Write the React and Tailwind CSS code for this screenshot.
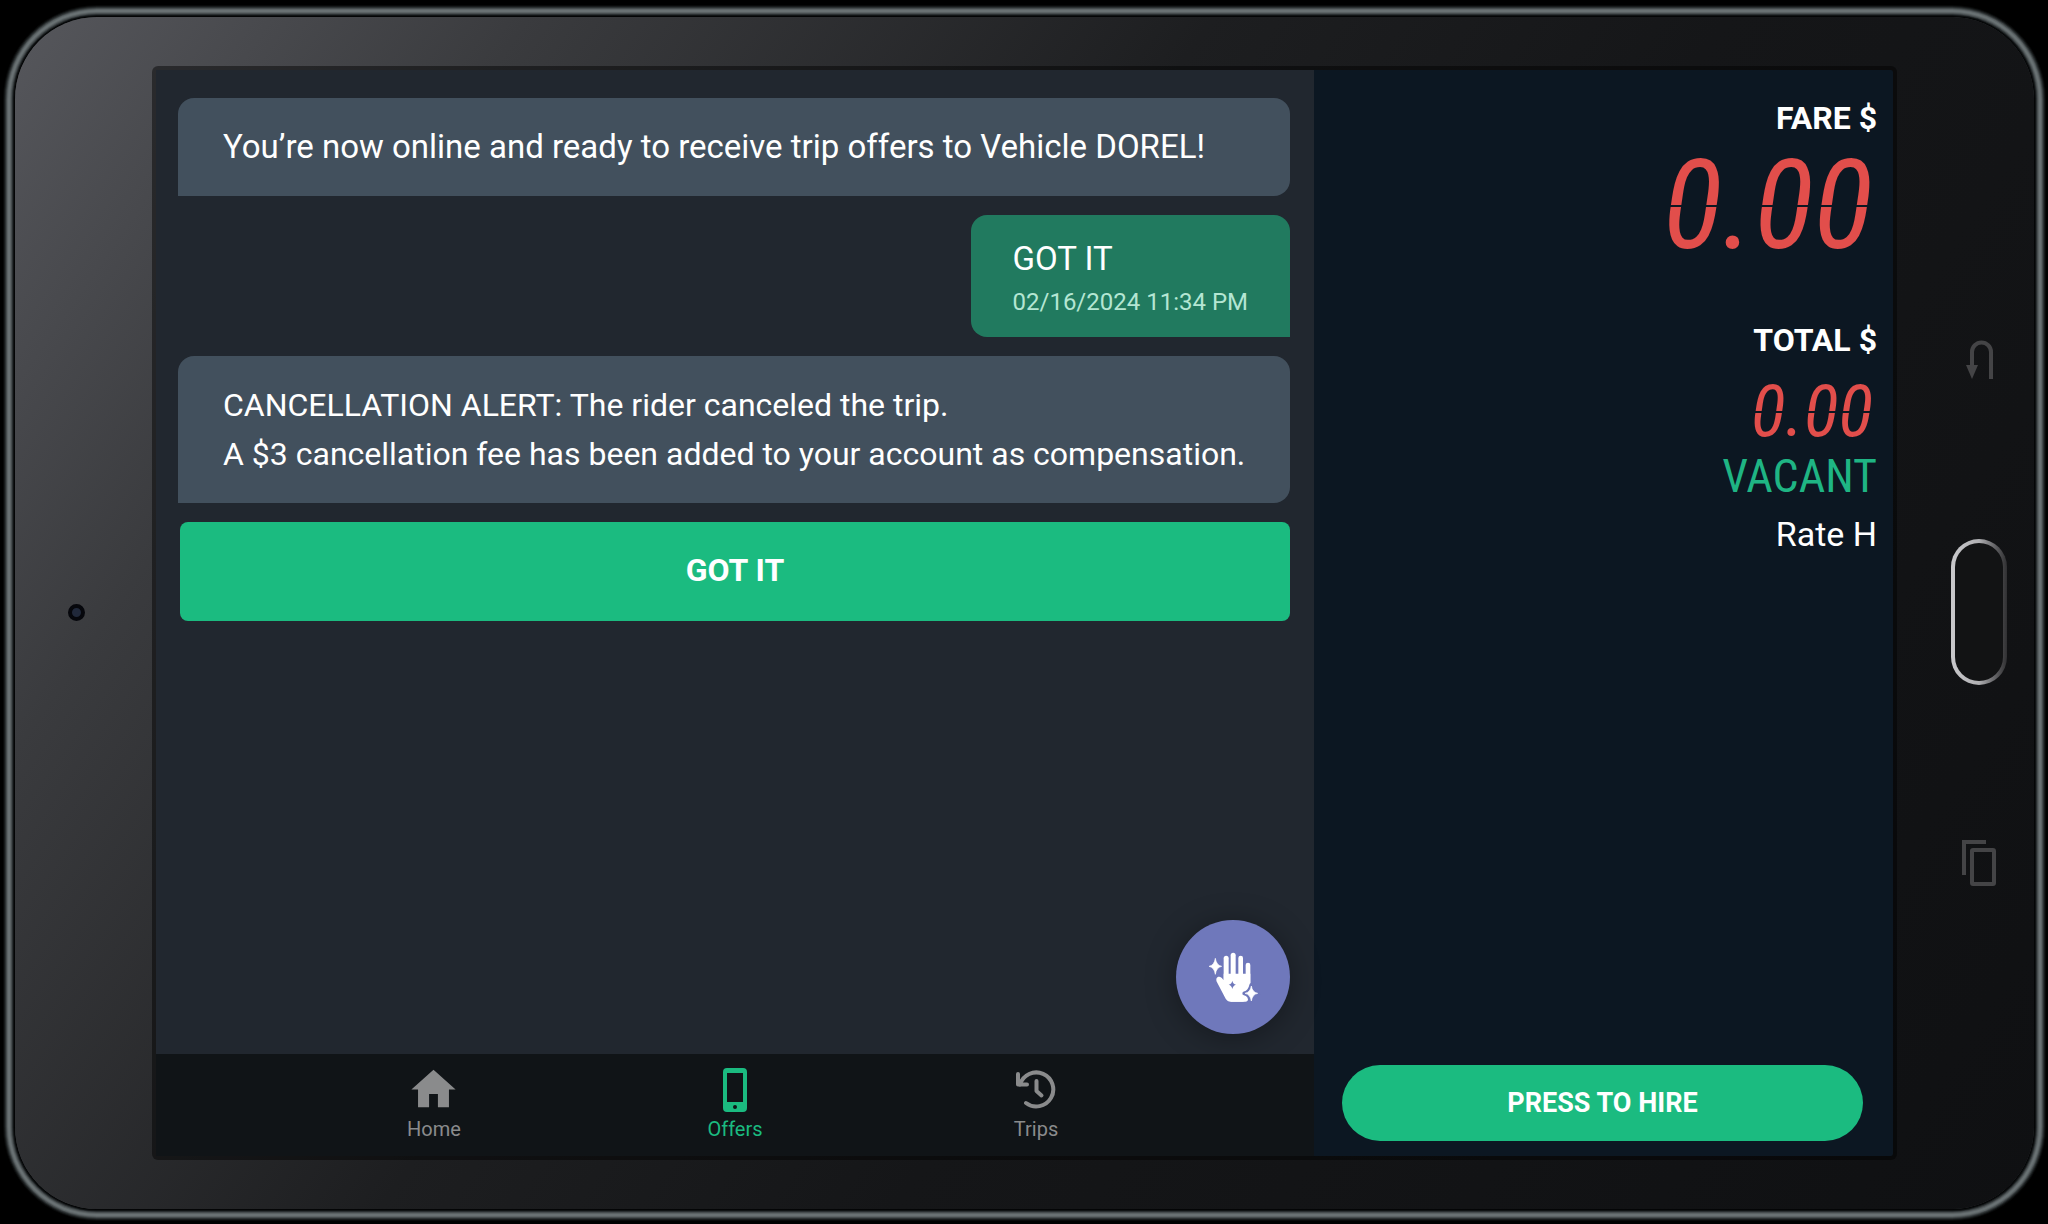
import { MdHome } from "react-icons/md";

const roboto = "font-['Roboto',sans-serif]";

function HandSparkleIcon() {
  return (
    <svg viewBox="-5 6 240 210" className="h-[70px] w-20" aria-hidden="true">
      <g fill="#fff">
        <rect x="87" y="47" width="15" height="80" rx="7.5" />
        <rect x="108" y="38" width="15" height="80" rx="7.5" />
        <rect x="131" y="47" width="14" height="80" rx="7" />
        <rect x="153" y="68" width="14" height="70" rx="7" />
        <path d="M87 101H167V140C167 165 155 185 143 185H108C101 185 97 182 93 176L67 127C62 116 67 109 74 110C80 111 84 116 87 121Z" />
        <path d="M100 150H150L160 178Q160 185 152 185H108Z" />
        <path d="M62 55Q65 76 81 79Q65 82 62 103Q59 82 43 79Q59 76 62 55Z" stroke="#fff" strokeWidth="2" />
      </g>
      <path d="M113 122Q115 132 124 134Q115 136 113 147Q111 136 102 134Q111 132 113 122Z" fill="#6f78bb" />
      <path d="M170 135Q174 156 191 160Q174 164 170 185Q166 164 149 160Q166 156 170 135Z" fill="#6f78bb" stroke="#6f78bb" strokeWidth="12" strokeLinejoin="round" />
      <path d="M170 138Q173 157 189 160Q173 163 170 183Q167 163 151 160Q167 157 170 138Z" fill="#fff" stroke="#fff" strokeWidth="2" />
    </svg>
  );
}

function PhoneIcon() {
  return (
    <svg viewBox="0 0 24 44" className="h-11 w-6" aria-hidden="true">
      <path
        fillRule="evenodd"
        fill="currentColor"
        d="M4 0H20Q24 0 24 4V40Q24 44 20 44H4Q0 44 0 40V4Q0 0 4 0ZM4 5V34H20V5ZM12 37A2 2 0 1 0 12 41A2 2 0 1 0 12 37Z"
      />
    </svg>
  );
}

function HistoryIcon() {
  return (
    <svg viewBox="0 0 42 40" className="h-10 w-[42px]" fill="none" stroke="currentColor" strokeWidth="4" strokeLinecap="round" strokeLinejoin="round" aria-hidden="true">
      <path d="M5 14.5A17 17 0 1 1 11 33" />
      <path d="M3 4V14.5H12" />
      <path d="M21.500 11V21L26.500 25.500" />
    </svg>
  );
}

function NavItem({ label, active, children }) {
  return (
    <a
      href="#"
      aria-current={active ? "page" : undefined}
      className={`flex flex-col items-center text-xl leading-6 ${active ? "text-[#1bbb80]" : "text-[#8a8b8c]"}`}
    >
      <span className="flex h-[55px] items-center justify-center">{children}</span>
      {label}
    </a>
  );
}

function DeviceKeys() {
  return (
    <div className="flex w-[137px] shrink-0 flex-col items-center justify-center gap-[155px] pb-0.5 pl-[26px] text-[#444446]">
      <button type="button" aria-label="Back">
        <svg viewBox="0 0 30 46" className="h-[46px] w-[30px]" aria-hidden="true">
          <path d="M8 30V14A9.500 9.500 0 0 1 27 14V41" fill="none" stroke="currentColor" strokeWidth="4" />
          <path d="M2 27H14L8 41Z" fill="currentColor" />
        </svg>
      </button>
      <button
        type="button"
        aria-label="Home key"
        className="h-[146px] w-14 rounded-full bg-gradient-to-r from-[#c9c9cc] via-[#b0b0b3] to-[#303032] p-1"
      >
        <span className="block h-full rounded-full bg-[#121314]" />
      </button>
      <button type="button" aria-label="Recent apps">
        <svg viewBox="0 0 34 46" className="h-[46px] w-[34px]" fill="none" stroke="currentColor" strokeWidth="4" aria-hidden="true">
          <path d="M24 2H2V35" />
          <rect x="10" y="10" width="22" height="34" rx="1" />
        </svg>
      </button>
    </div>
  );
}

export default function App() {
  return (
    <div className={`flex min-h-screen bg-black pt-[17px] pr-3.5 pb-[15px] pl-[15px] ${roboto}`}>
      <div className="flex flex-1 rounded-[82px] bg-[linear-gradient(125deg,#56575c_0%,#3a3b3e_18%,#1d1e20_42%,#151618_60%,#0f1012_100%)] shadow-[0_0_0_1px_#040506,0_0_0_2px_#101314,0_0_0_3px_#2a2f31,0_0_0_4px_#464c4e,0_0_0_5px_#5b6264,0_0_0_7px_#697173,0_0_0_8px_#5d6466,0_0_0_9px_#454b4d,0_0_0_10px_#2c3132,0_0_0_11px_#171a1b,0_0_0_12px_#080909]">
        <div className="flex w-[137px] shrink-0 items-center justify-center pr-3.5 pb-0.5">
          <span className="size-[17px] rounded-full border-4 border-[#06070c] bg-[#20283a]" />
        </div>

        <main className="my-[49px] flex flex-1 rounded-md border-4 border-black/45 bg-clip-padding bg-[#0c1722]">
          <section className="flex flex-2 flex-col bg-[#21272f]">
            <div className="flex flex-1 flex-col gap-5 pt-7 pr-6 pb-5 pl-[22px]">
              <div className="flex flex-col gap-[19px] text-white">
                <p className="rounded-2xl rounded-bl-none bg-[#42505d] px-[45px] py-6 text-[33px] leading-[50px]">
                  You’re now online and ready to receive trip offers to Vehicle DOREL!
                </p>
                <div className="self-end rounded-2xl rounded-br-none bg-[#217a5f] px-[42px] pt-5 pb-4">
                  <p className="text-[33px] leading-[48px]">GOT IT</p>
                  <p className="text-2xl leading-[38px] text-[#b4e6d3]">02/16/2024 11:34 PM</p>
                </div>
                <p className="rounded-2xl rounded-bl-none bg-[#42505d] pt-[25px] pr-4 pb-6 pl-[45px] text-[32px] leading-[49px]">
                  CANCELLATION ALERT: The rider canceled the trip.
                  <br />A $3 cancellation fee has been added to your account as compensation.
                </p>
                <button type="button" className="ml-0.5 h-[99px] rounded-lg bg-[#1bbb80] pb-1 text-[32px] font-bold">
                  GOT IT
                </button>
              </div>
              <button
                type="button"
                aria-label="Raise hand"
                className="mt-auto flex size-[114px] items-center justify-center self-end rounded-full bg-[#6f78bb] shadow-[0_4px_30px_rgba(0,0,0,0.35)]"
              >
                <HandSparkleIcon />
              </button>
            </div>
            <nav className="flex h-[102px] justify-center bg-[#101417]">
              <div className="grid w-[78%] grid-cols-3 pt-2">
                <NavItem label="Home">
                  <MdHome size={53} />
                </NavItem>
                <NavItem label="Offers" active>
                  <PhoneIcon />
                </NavItem>
                <NavItem label="Trips">
                  <HistoryIcon />
                </NavItem>
              </div>
            </nav>
          </section>

          <aside className="flex flex-1 flex-col text-white">
            <dl className="flex flex-col px-4 pt-7 text-right">
              <dt className="text-[32px] leading-10 font-bold">FARE $</dt>
              <dd className="mt-4 self-end bg-[linear-gradient(#e24e4b_49%,transparent_49%,transparent_51%,#e24e4b_51%)] bg-clip-text pr-1 font-['Roboto_Condensed',sans-serif] text-[124px] leading-[104px] text-transparent italic">
                0.00
              </dd>
              <dt className="mt-[62px] text-[32px] leading-10 font-bold">TOTAL $</dt>
              <dd className="mt-4 self-end bg-[linear-gradient(#e24e4b_49%,transparent_49%,transparent_51%,#e24e4b_51%)] bg-clip-text pr-1 font-['Roboto_Condensed',sans-serif] text-[72px] leading-[72px] text-transparent italic">
                0.00
              </dd>
              <dd className="mt-1 font-['Roboto_Condensed',sans-serif] text-[46px] leading-12 text-[#1fb584]">VACANT</dd>
              <dd className="mt-3.5 text-[34px] leading-10">Rate H</dd>
            </dl>
            <button type="button" className="mt-auto mr-[30px] mb-[15px] ml-7 h-19 rounded-full bg-[#1bbb80] text-[27px] font-bold">
              PRESS TO HIRE
            </button>
          </aside>
        </main>

        <DeviceKeys />
      </div>
    </div>
  );
}
